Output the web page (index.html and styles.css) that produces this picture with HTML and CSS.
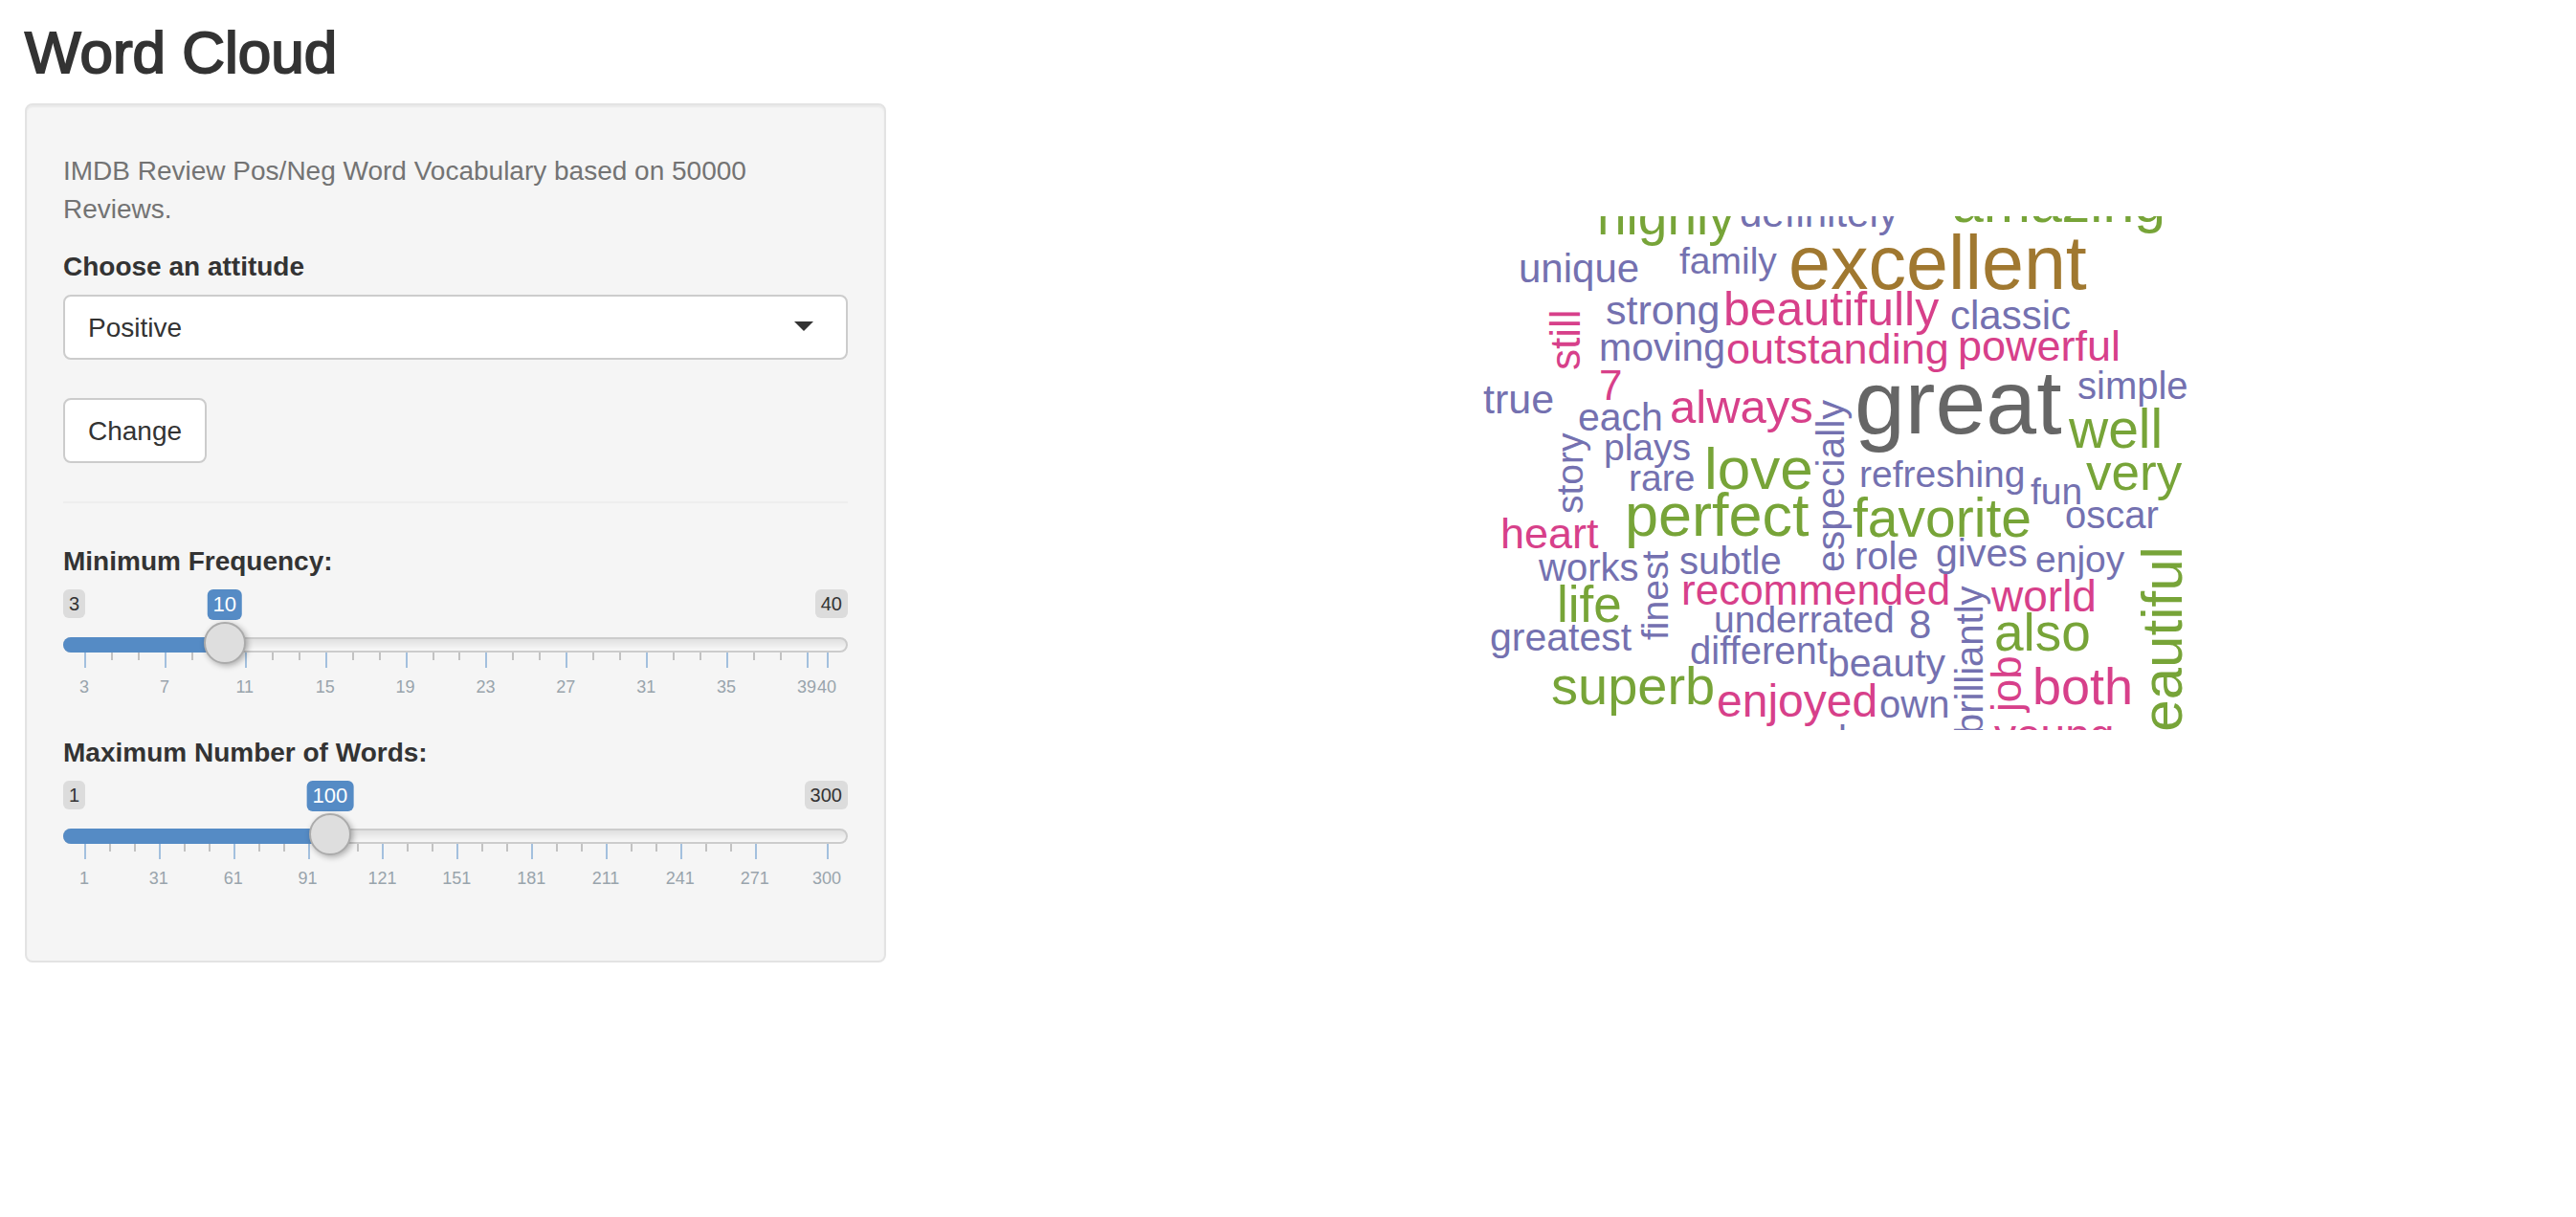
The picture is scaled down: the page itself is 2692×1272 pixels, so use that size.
FILE: index.html
```html
<!DOCTYPE html>
<html lang="en">
<head>
<meta charset="utf-8">
<meta name="viewport" content="width=device-width, initial-scale=1">
<title>Word Cloud</title>
<link rel="stylesheet" href="styles.css">
</head>
<body>
<div class="page">
  <h1 class="title">Word Cloud</h1>
  <div class="layout">
    <form class="well">
      <p class="help">IMDB Review Pos/Neg Word Vocabulary based on 50000 Reviews.</p>

      <label class="label" for="attitude">Choose an attitude</label>
      <div class="select-wrap">
        <select class="select" id="attitude">
          <option selected>Positive</option>
          <option>Negative</option>
        </select>
        <svg class="caret" viewBox="0 0 20 10" aria-hidden="true"><path d="M0 0H20L10 10Z"/></svg>
      </div>

      <button class="button" type="button">Change</button>
      <hr class="rule">

      <div class="group">
        <label class="label" for="freq">Minimum Frequency:</label>
        <div class="slider" style="--p: 0.1892">
          <div class="tags"><span class="tag">3</span><span class="tag">40</span></div>
          <output class="value" for="freq">10</output>
          <div class="rail"></div>
          <div class="fill"></div>
          <input class="range" id="freq" type="range" min="3" max="40" value="10">
          <svg class="scale" aria-hidden="true">
            <g class="minor">
              <rect x="3.604%"/><rect x="7.207%"/><rect x="14.414%"/><rect x="18.018%"/>
              <rect x="25.225%"/><rect x="28.829%"/><rect x="36.036%"/><rect x="39.640%"/>
              <rect x="46.847%"/><rect x="50.450%"/><rect x="57.658%"/><rect x="61.261%"/>
              <rect x="68.468%"/><rect x="72.072%"/><rect x="79.279%"/><rect x="82.883%"/>
              <rect x="90.090%"/><rect x="93.694%"/>
            </g>
            <g class="major">
              <rect x="0%"/><rect x="10.811%"/><rect x="21.622%"/><rect x="32.432%"/>
              <rect x="43.243%"/><rect x="54.054%"/><rect x="64.865%"/><rect x="75.676%"/>
              <rect x="86.486%"/><rect x="97.297%"/><rect x="100%"/>
            </g>
            <g class="numbers">
              <text x="0%" y="42">3</text><text x="10.811%" y="42">7</text>
              <text x="21.622%" y="42">11</text><text x="32.432%" y="42">15</text>
              <text x="43.243%" y="42">19</text><text x="54.054%" y="42">23</text>
              <text x="64.865%" y="42">27</text><text x="75.676%" y="42">31</text>
              <text x="86.486%" y="42">35</text><text x="97.297%" y="42">39</text>
              <text x="100%" y="42">40</text>
            </g>
          </svg>
        </div>
      </div>

      <div class="group">
        <label class="label" for="max">Maximum Number of Words:</label>
        <div class="slider" style="--p: 0.3311">
          <div class="tags"><span class="tag">1</span><span class="tag">300</span></div>
          <output class="value" for="max">100</output>
          <div class="rail"></div>
          <div class="fill"></div>
          <input class="range" id="max" type="range" min="1" max="300" value="100">
          <svg class="scale" aria-hidden="true">
            <g class="minor">
              <rect x="3.344%"/><rect x="6.689%"/><rect x="13.378%"/><rect x="16.722%"/>
              <rect x="23.411%"/><rect x="26.756%"/><rect x="33.445%"/><rect x="36.789%"/>
              <rect x="43.478%"/><rect x="46.823%"/><rect x="53.512%"/><rect x="56.856%"/>
              <rect x="63.545%"/><rect x="66.890%"/><rect x="73.579%"/><rect x="76.923%"/>
              <rect x="83.612%"/><rect x="86.957%"/>
            </g>
            <g class="major">
              <rect x="0%"/><rect x="10.033%"/><rect x="20.067%"/><rect x="30.100%"/>
              <rect x="40.134%"/><rect x="50.167%"/><rect x="60.201%"/><rect x="70.234%"/>
              <rect x="80.268%"/><rect x="90.301%"/><rect x="100%"/>
            </g>
            <g class="numbers">
              <text x="0%" y="42">1</text><text x="10.033%" y="42">31</text>
              <text x="20.067%" y="42">61</text><text x="30.100%" y="42">91</text>
              <text x="40.134%" y="42">121</text><text x="50.167%" y="42">151</text>
              <text x="60.201%" y="42">181</text><text x="70.234%" y="42">211</text>
              <text x="80.268%" y="42">241</text><text x="90.301%" y="42">271</text>
              <text x="100%" y="42">300</text>
            </g>
          </svg>
        </div>
      </div>
    </form>

    <main class="plot">
      <svg class="cloud" viewBox="952 226 1714 537" role="img" aria-label="Word cloud">
        <text class="gray" x="1938" y="453" font-size="95">great</text>
        <text class="brown" x="1869" y="302" font-size="79">excellent</text>
        <g class="green">
          <text x="1669" y="245" font-size="55">highly</text>
          <text x="2040" y="232" font-size="59">amazing</text>
          <text x="1781" y="511" font-size="62">love</text>
          <text x="1698" y="560" font-size="63">perfect</text>
          <text x="1936" y="561" font-size="57">favorite</text>
          <text x="2162" y="468" font-size="57">well</text>
          <text x="2180" y="512" font-size="53">very</text>
          <text x="1627" y="650" font-size="53">life</text>
          <text x="2084" y="680" font-size="55">also</text>
          <text x="1621" y="736" font-size="56">superb</text>
          <text transform="translate(2280 798) rotate(-90)" font-size="60">beautiful</text>
        </g>
        <g class="pink">
          <text x="1801" y="340" font-size="50">beautifully</text>
          <text x="1804" y="380" font-size="45">outstanding</text>
          <text x="2046" y="377" font-size="45">powerful</text>
          <text x="1671" y="418" font-size="44">7</text>
          <text x="1745" y="442" font-size="49">always</text>
          <text x="1568" y="573" font-size="45">heart</text>
          <text x="1757" y="632" font-size="44">recommended</text>
          <text x="2081" y="639" font-size="46">world</text>
          <text x="2124" y="736" font-size="54">both</text>
          <text x="1794" y="749" font-size="48">enjoyed</text>
          <text x="2084" y="784" font-size="46">young</text>
          <text transform="translate(1651 387) rotate(-90)" font-size="44">still</text>
          <text transform="translate(2112 744) rotate(-90)" font-size="44">job</text>
        </g>
        <g class="purple">
          <text x="1818" y="237" font-size="42">definitely</text>
          <text x="1587" y="295" font-size="42">unique</text>
          <text x="1755" y="286" font-size="39">family</text>
          <text x="1678" y="339" font-size="43">strong</text>
          <text x="2038" y="344" font-size="42">classic</text>
          <text x="1671" y="377" font-size="41">moving</text>
          <text x="1550" y="432" font-size="43">true</text>
          <text x="2171" y="417" font-size="40">simple</text>
          <text x="1649" y="450" font-size="41">each</text>
          <text x="1676" y="481" font-size="39">plays</text>
          <text x="1702" y="513" font-size="39">rare</text>
          <text x="1943" y="509" font-size="39">refreshing</text>
          <text x="2122" y="527" font-size="39">fun</text>
          <text x="2158" y="552" font-size="40">oscar</text>
          <text x="1608" y="607" font-size="40">works</text>
          <text x="1755" y="600" font-size="40">subtle</text>
          <text x="1938" y="595" font-size="40">role</text>
          <text x="2023" y="592" font-size="41">gives</text>
          <text x="2127" y="598" font-size="39">enjoy</text>
          <text x="1557" y="680" font-size="41">greatest</text>
          <text x="1791" y="661" font-size="39">underrated</text>
          <text x="1995" y="667" font-size="42">8</text>
          <text x="1766" y="694" font-size="40">different</text>
          <text x="1910" y="707" font-size="41">beauty</text>
          <text x="1964" y="750" font-size="40">own</text>
          <text x="1921" y="787" font-size="40">l</text>
          <text transform="translate(1654 537) rotate(-90)" font-size="39">story</text>
          <text transform="translate(1927 598) rotate(-90)" font-size="41">especially</text>
          <text transform="translate(1743 669) rotate(-90)" font-size="39">finest</text>
          <text transform="translate(2072 768) rotate(-90)" font-size="40">brilliantly</text>
        </g>
      </svg>
    </main>
  </div>
</div>
</body>
</html>
```

FILE: styles.css
```css
* {
  box-sizing: border-box;
}

body {
  margin: 0;
  background: #fff;
  color: #333;
  font: 28px/40px "Liberation Sans", Arial, sans-serif;
}

.page {
  padding: 21px 26px;
}

.title {
  margin: 0 0 19px;
  font-size: 62px;
  font-weight: 400;
  line-height: 68px;
  -webkit-text-stroke: 2px #333;
}

.layout {
  display: grid;
  grid-template-columns: calc((100% + 60px) / 3) 1fr;
  gap: 26px;
  align-items: start;
}

/* Sidebar */
.well {
  padding: 38px;
  border: 2px solid #e3e3e3;
  border-radius: 8px;
  background: #f5f5f5;
  box-shadow: inset 0 2px 2px rgba(0, 0, 0, 0.05);
}

.help {
  margin: 11px 0 20px;
  color: #737373;
}

.label {
  display: block;
  margin-bottom: 9px;
  font-weight: 700;
}

.select-wrap {
  position: relative;
  margin-bottom: 40px;
}

.select,
.button {
  height: 68px;
  padding: 1px 24px 0;
  border: 2px solid #ccc;
  border-radius: 8px;
  background: #fff;
  color: #333;
  font: inherit;
}

.select {
  display: block;
  width: 100%;
  appearance: none;
}

.caret {
  position: absolute;
  top: 28px;
  right: 36px;
  width: 20px;
  height: 10px;
  fill: #333;
  pointer-events: none;
}

.button {
  display: block;
}

.rule {
  margin: 40px 0 41px;
  border: 0;
  border-top: 2px solid #eee;
}

/* Sliders */
.group + .group {
  margin-top: 31px;
}

.group:last-child {
  margin-bottom: 30px;
}

.slider {
  --at: calc(22px + (100% - 44px) * var(--p));
  position: relative;
  height: 120px;
}

.tags {
  display: flex;
  justify-content: space-between;
}

.tag,
.value {
  padding: 0 6px;
  border-radius: 6px;
}

.tag {
  background: #dcdcdc;
  font-size: 20px;
  line-height: 30px;
}

.value {
  position: absolute;
  top: 0;
  left: var(--at);
  transform: translateX(-50%);
  background: #558bc5;
  color: #fff;
  font-size: 22px;
  line-height: 32px;
}

.rail,
.fill {
  position: absolute;
  top: 50px;
  left: 0;
  height: 16px;
}

.rail {
  width: 100%;
  border: 2px solid #ccc;
  border-radius: 8px;
  background: linear-gradient(#e0e0e0, #f8f8f8);
}

.fill {
  width: var(--at);
  border-radius: 8px 0 0 8px;
  background: #558bc5;
}

.range {
  position: absolute;
  z-index: 1;
  top: 34px;
  left: 0;
  width: 100%;
  height: 44px;
  margin: 0;
  background: transparent;
  appearance: none;
}

.range::-webkit-slider-thumb {
  width: 44px;
  height: 44px;
  border: 2px solid #ababab;
  border-radius: 50%;
  background: #dedede;
  box-shadow: 2px 2px 6px rgba(0, 0, 0, 0.3);
  appearance: none;
}

.scale {
  position: absolute;
  top: 66px;
  left: 22px;
  width: calc(100% - 44px);
  height: 54px;
  overflow: visible;
}

.scale rect {
  width: 2px;
  shape-rendering: crispEdges;
}

.minor rect {
  height: 8px;
  fill: #c2c2c2;
}

.major rect {
  height: 16px;
  fill: #a3c0de;
}

.numbers {
  fill: #99a4ac;
  font-size: 18px;
  text-anchor: middle;
}

/* Word cloud */
.plot {
  padding-top: 118px;
}

.cloud {
  display: block;
  width: 100%;
  overflow: hidden;
}

.gray { fill: #666; }
.brown { fill: #a07830; }
.green { fill: #77a438; }
.pink { fill: #d7408a; }
.purple { fill: #7471b0; }
```
